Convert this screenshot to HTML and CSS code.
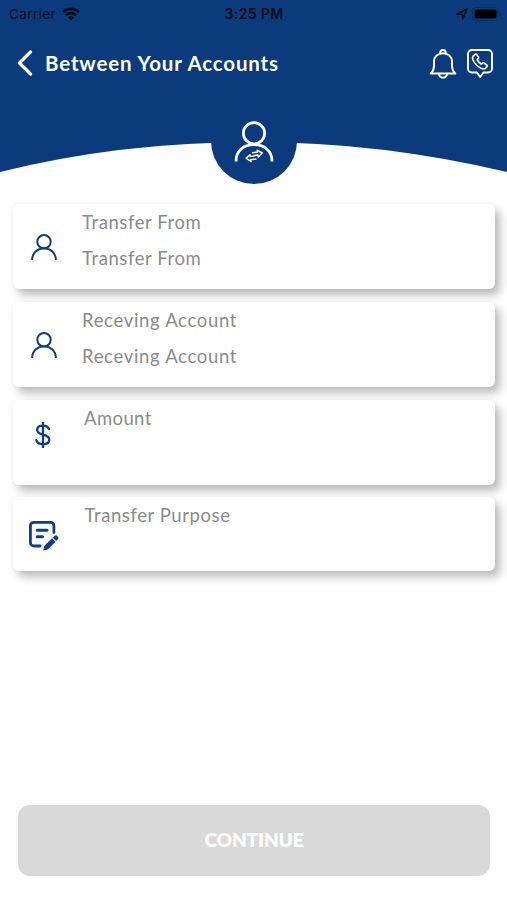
FILE: index.html
```html
<!DOCTYPE html>
<html lang="en">
<head>
<meta charset="utf-8">
<meta name="viewport" content="width=device-width, initial-scale=1">
<title>Between Your Accounts</title>
<link rel="stylesheet" href="styles.css">
</head>
<body>
<svg class="defs" width="0" height="0">
  <symbol id="person" viewBox="0 0 26 26">
    <circle cx="13" cy="7.7" r="6.7"/>
    <path d="M1.2 25.5a11.8 11.2 0 0 1 23.6 0"/>
  </symbol>
</svg>
<div class="screen">
  <header class="header">
    <svg class="header-shape" viewBox="0 0 507 186">
      <path d="M0 0H507V172Q380 142 254 142Q120 142 0 172Z"/>
      <circle cx="254" cy="141" r="43"/>
    </svg>
    <div class="status">
      <div class="status-left">
        <span class="carrier">Carrier</span>
        <svg class="wifi" viewBox="0 0 18 14">
          <path d="M1.2 5.1a11.2 11.2 0 0 1 15.6 0M4 8.2a7.2 7.2 0 0 1 10 0"/>
          <path class="dot" d="M9 13.5L5.9 10.4a4.5 4.5 0 0 1 6.2 0Z"/>
        </svg>
      </div>
      <span class="time">3:25 PM</span>
      <div class="status-right">
        <svg class="location" viewBox="0 0 12 12"><path d="M1 6.2L11 1L6.7 11L6.2 6.3Z"/></svg>
        <svg class="battery" viewBox="0 0 30 14"><rect class="shell" x="0.5" y="0.5" width="25.5" height="13" rx="3.5"/><rect x="2.5" y="2.5" width="22" height="9" rx="2"/><path class="cap" d="M27.5 4.7q3 2.3 0 4.6Z"/></svg>
      </div>
    </div>
    <div class="titlebar">
      <svg class="back" viewBox="0 0 16 26"><path d="M13.5 2L2.5 13L13.5 24"/></svg>
      <h1 class="title">Between Your Accounts</h1>
      <svg class="bell" viewBox="0 0 28 30">
        <path d="M1.7 24.5Q5 21.5 5 17V12.5C5 7.5 9 4.2 14 4.2S23 7.5 23 12.5V17Q23 21.5 26.3 24.5Z"/>
        <path d="M11.2 4.6V3.9a2.8 2.8 0 0 1 5.6 0V4.6M10 24.8a4 4 0 0 0 8 0"/>
      </svg>
      <svg class="call" viewBox="0 0 26 30">
        <path d="M5 1H21a4 4 0 0 1 4 4V19.5a4 4 0 0 1-4 4H16.5L13.2 28L9.9 23.5H5a4 4 0 0 1-4-4V5a4 4 0 0 1 4-4Z"/>
        <path class="thin" d="M6.2 7.1L8.2 5.3Q9.1 4.7 9.8 5.6L11.5 8.1Q12 9 11.2 9.7L10.1 10.7Q11.3 13.3 14.2 15.1L15.5 14Q16.3 13.4 17.1 14L19.8 16Q20.5 16.7 20 17.6L18.4 19.4Q16.7 20.7 13.8 19.1C9.5 16.8 7 13.9 5.8 10.6Q5.1 8.3 6.2 7.1Z"/>
      </svg>
    </div>
    <svg class="badge" viewBox="0 0 40 42">
      <circle cx="20" cy="12.2" r="10.6"/>
      <path d="M2 40.5C2 29.5 9.7 23.7 20 23.7S38 29.5 38 40.5"/>
      <g class="arrows">
        <path d="M18 31.7L23.5 31L23.2 29.2L28.2 32L24.2 36L23.9 34.1L20 34.6"/>
        <path d="M22.5 38L16.8 38.7L17 40.4L12 37.2L16 33.7L16.3 35.6L20.4 35.1"/>
      </g>
    </svg>
  </header>
  <main class="form">
    <section class="card">
      <svg class="icon person"><use href="#person"/></svg>
      <div class="fields"><div class="label">Transfer From</div><div class="label">Transfer From</div></div>
    </section>
    <section class="card">
      <svg class="icon person"><use href="#person"/></svg>
      <div class="fields receiving"><div class="label">Receving Account</div><div class="label">Receving Account</div></div>
    </section>
    <section class="card amount">
      <svg class="icon dollar" viewBox="0 0 16 26"><path d="M14 7.2C13.2 4.8 11 3.7 8 3.7C4.5 3.7 2.2 5.4 2.2 8C2.2 14.3 14.3 10.7 14.3 17.6C14.3 20.5 11.8 22.3 8.2 22.3C4.7 22.3 2 20.8 1.3 18M8 .5V25.5"/></svg>
      <div class="fields"><div class="label">Amount</div></div>
    </section>
    <section class="card purpose">
      <svg class="icon note" viewBox="0 0 30 30">
        <path d="M11 25H5a3.6 3.6 0 0 1-3.6-3.6V4.9A3.6 3.6 0 0 1 5 1.3H21.3a3.6 3.6 0 0 1 3.6 3.6V11.5"/>
        <path class="bar" d="M8.2 9.3H18M8.2 15.8H13.5"/>
        <path class="pen" d="M14.3 29.6L15.2 25.1L23.1 17.3L26.5 20.8L18.7 28.5ZM23.7 16.7L25.7 14.8Q27 13.8 28.2 14.9L29 15.8Q30 17.1 28.9 18.3L27.1 20.1Z"/>
      </svg>
      <div class="fields"><div class="label">Transfer Purpose</div></div>
    </section>
  </main>
  <footer class="footer"><button class="continue">CONTINUE</button></footer>
</div>
</body>
</html>
```
FILE: styles.css
```css
* { box-sizing: border-box; }
body { margin: 0; background: #fefefe; font-family: Lato, "Liberation Sans", sans-serif; }
svg { display: block; flex: none; fill: none; stroke-linecap: round; stroke-linejoin: round; }
.defs { position: absolute; }
.screen { width: 507px; height: 900px; display: flex; flex-direction: column; overflow: hidden; }
.header { position: relative; height: 186px; }
.header-shape { position: absolute; top: 0; left: 0; width: 507px; height: 186px; z-index: -1; fill: #0b3b7c; }

.status { display: grid; grid-template-columns: 1fr auto 1fr; align-items: center; height: 27px; padding: 0 7px 0 9px; color: #050d1b; font-family: Inter, "Liberation Sans", sans-serif; font-size: 13.5px; }
.status-left, .status-right { display: flex; align-items: center; }
.carrier { width: 47px; letter-spacing: .4px; }
.wifi { width: 18px; height: 14px; margin-left: 6px; stroke: #050d1b; stroke-width: 2.8; stroke-linecap: butt; }
.wifi .dot { fill: #050d1b; stroke: none; }
.time { font-size: 14px; font-weight: 600; letter-spacing: .35px; margin-left: -1px; }
.status-right { justify-content: flex-end; gap: 4px; }
.location { width: 12px; height: 12px; stroke: #050d1b; stroke-width: 1.5; }
.battery { width: 30px; height: 14px; margin-right: -2px; fill: #000; }
.battery .shell { fill: none; stroke: #092f66; }
.battery .cap { fill: #092a5a; }

.titlebar { display: flex; align-items: center; height: 71px; padding: 0 14px 0 17px; }
.back { width: 16px; height: 26px; stroke: #fff; stroke-width: 3.2; }
.title { margin: 0 auto 0 12px; color: #fff; font-size: 20.5px; font-weight: 700; line-height: 28px; letter-spacing: .84px; white-space: nowrap; }
.bell { width: 28px; height: 30px; margin: 3px 10px 0 0; stroke: #fff; stroke-width: 2; }
.call { width: 26px; height: 30px; margin-top: 3px; stroke: #fff; stroke-width: 1.9; }
.call .thin { stroke-width: 1.6; }
.badge { width: 40px; height: 42px; margin: 23px auto 0; stroke: #fff; stroke-width: 2.8; stroke-linecap: butt; }
.badge .arrows { stroke-width: 1.5; }

.form { display: flex; flex-direction: column; gap: 12.5px; padding: 18px 12px 0 13px; }
.card { display: flex; align-items: flex-start; height: 85.3px; background: #fff; border-radius: 6px; box-shadow: 5px 6px 9px rgba(0, 0, 0, .26), 0 0 5px rgba(0, 0, 0, .04); }
.purpose { height: 73.5px; }
.icon { stroke: #0d3d82; }
.person { width: 26px; height: 26px; margin: 30px 0 0 17.5px; stroke-width: 2; }
.dollar { width: 16px; height: 26px; margin: 22px 0 0 21.5px; stroke-width: 2.3; }
.note { width: 30px; height: 30px; margin: 24px 0 0 16px; stroke-width: 2.8; }
.note .bar { stroke-width: 3; }
.note .pen { fill: #0d3d82; stroke: none; }
.fields { margin: 0 0 0 25.5px; color: #8b8b8b; font-size: 18.5px; line-height: 36px; letter-spacing: .58px; white-space: nowrap; }
.receiving { letter-spacing: .68px; }
.amount .fields { margin-left: 33.5px; letter-spacing: .4px; }
.purpose .fields { margin: 0 0 0 25.5px; }

.footer { margin-top: auto; padding: 0 17px 24px 18px; }
.continue { display: block; width: 100%; height: 71px; border: 0; border-radius: 12px; background: #d9d9d9; color: #fff; font: 800 19px/69px Lato, "Liberation Sans", sans-serif; letter-spacing: -.1px; padding: 0 0 2px; }
```
